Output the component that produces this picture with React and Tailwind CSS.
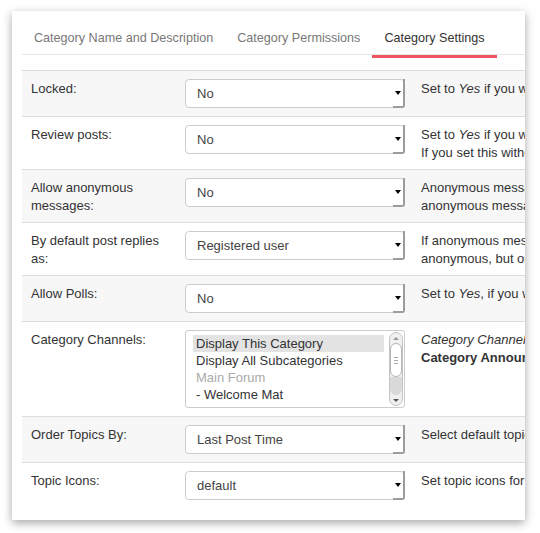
import React from "react";

const rows = [
  {
    label: "Locked:",
    value: "No",
    desc: [<>Set to <i>Yes</i> if you want to lock this category.</>],
  },
  {
    label: "Review posts:",
    value: "No",
    desc: [
      <>Set to <i>Yes</i> if you want posts to be reviewed.</>,
      <>If you set this without moderators...</>,
    ],
  },
  {
    label: ["Allow anonymous", "messages:"],
    value: "No",
    desc: [<>Anonymous messages can be posted.</>, <>anonymous messages are shown.</>],
  },
  {
    label: ["By default post replies", "as:"],
    value: "Registered user",
    desc: [<>If anonymous messages are allowed</>, <>anonymous, but only when chosen.</>],
  },
  {
    label: "Allow Polls:",
    value: "No",
    desc: [<>Set to <i>Yes</i>, if you want polls.</>],
  },
  { label: "Category Channels:", list: true },
  {
    label: "Order Topics By:",
    value: "Last Post Time",
    desc: [<>Select default topic ordering.</>],
  },
  {
    label: "Topic Icons:",
    value: "default",
    desc: [<>Set topic icons for this category.</>],
  },
];

const Select = ({ value }) => (
  <div className="relative w-[220px] h-[29px] bg-white border border-[#cccccc] rounded-[4px] flex items-center pl-[11px] text-[#444]">
    {value}
    <div className="absolute top-[-1px] right-[-1px] bottom-[-1px] w-[12px] border-r-2 border-b-2 border-[#9c9c9c] rounded-br-[3px] flex items-center justify-center">
      <span className="w-0 h-0 border-l-[3px] border-r-[3px] border-t-[4px] border-l-transparent border-r-transparent border-t-black mt-[1px]" />
    </div>
  </div>
);

const ListBox = () => (
  <div className="relative w-[220px] h-[78px] bg-white border border-[#cccccc] rounded-[3px] flex">
    <div className="flex-1 pl-[7px] pr-[5px] pt-[4px] leading-[17px]">
      <div className="bg-[#e3e3e3] pl-[3px] text-[#333]">Display This Category</div>
      <div className="pl-[3px] text-[#333]">Display All Subcategories</div>
      <div className="pl-[3px] text-[#aaaaaa]">Main Forum</div>
      <div className="pl-[3px] text-[#333]">- Welcome Mat</div>
    </div>
    <div className="w-[14px] my-[1px] mr-[1px] border border-[#c4c4c4] rounded-[7px] bg-[#f0f0f0] flex flex-col items-center">
      <div className="h-[10px] flex items-center justify-center">
        <span className="w-0 h-0 border-l-[3px] border-r-[3px] border-b-[3px] border-l-transparent border-r-transparent border-b-[#999]" />
      </div>
      <div className="w-[12px] h-[34px] bg-white border border-[#b5b5b5] rounded-[6px] flex flex-col items-center justify-center gap-[2px]">
        <span className="w-[4px] h-px bg-[#aaa]" />
        <span className="w-[4px] h-px bg-[#aaa]" />
        <span className="w-[4px] h-px bg-[#aaa]" />
      </div>
      <div className="w-[12px] flex-1 bg-[#d9d9d9] rounded-b-[6px]" />
      <div className="h-[10px] flex items-center justify-center">
        <span className="w-0 h-0 border-l-[3px] border-r-[3px] border-t-[3px] border-l-transparent border-r-transparent border-t-[#555]" />
      </div>
    </div>
  </div>
);

const App = () => {
  return (
    <div
      className="w-[540px] h-[533px] bg-white pt-[11px] pl-[12px] text-[13px] leading-[18px] text-[#333]"
      style={{ fontFamily: '"Liberation Sans", Arial, sans-serif' }}
    >
      <div className="w-[513px] h-[509px] bg-white overflow-hidden shadow-[0_3px_9px_rgba(0,0,0,0.35)] pl-[10px] pt-[10px]">
        <div className="w-[720px]">
          <div className="flex border-b border-[#e6e6e6] text-[12.6px]">
            <div className="shrink-0 px-3 pt-[8px] pb-[7px] text-[#777]">Category Name and Description</div>
            <div className="shrink-0 px-3 pt-[8px] pb-[7px] text-[#777]">Category Permissions</div>
            <div className="shrink-0 relative px-3 pt-[8px] pb-[7px] text-[#333]">
              Category Settings
              <span className="absolute left-0 right-0 bottom-[-4px] h-[3px] bg-[#ee5560]" />
            </div>
          </div>

          <div className="mt-[15px]">
            {rows.map((r, i) => (
              <div
                key={i}
                className={`flex border-t border-[#dddddd] ${i % 2 === 0 ? "bg-[#f7f7f7]" : "bg-white"}`}
              >
                <div className="w-[155px] shrink-0 pl-[9px] pr-2 pt-[9px] pb-[7px]">
                  {Array.isArray(r.label)
                    ? r.label.map((l, j) => <div key={j}>{l}</div>)
                    : r.label}
                </div>
                <div className="w-[236px] shrink-0 pl-2 py-2">
                  {r.list ? <ListBox /> : <Select value={r.value} />}
                </div>
                <div className="pl-[8px] pt-[9px] pb-[7px] whitespace-nowrap text-[#333]">
                  {r.list ? (
                    <>
                      <div><i>Category Channels</i></div>
                      <div className="font-bold">Category Announcements</div>
                    </>
                  ) : (
                    r.desc.map((d, j) => <div key={j}>{d}</div>)
                  )}
                </div>
              </div>
            ))}
          </div>
        </div>
      </div>
    </div>
  );
};

export default App;
